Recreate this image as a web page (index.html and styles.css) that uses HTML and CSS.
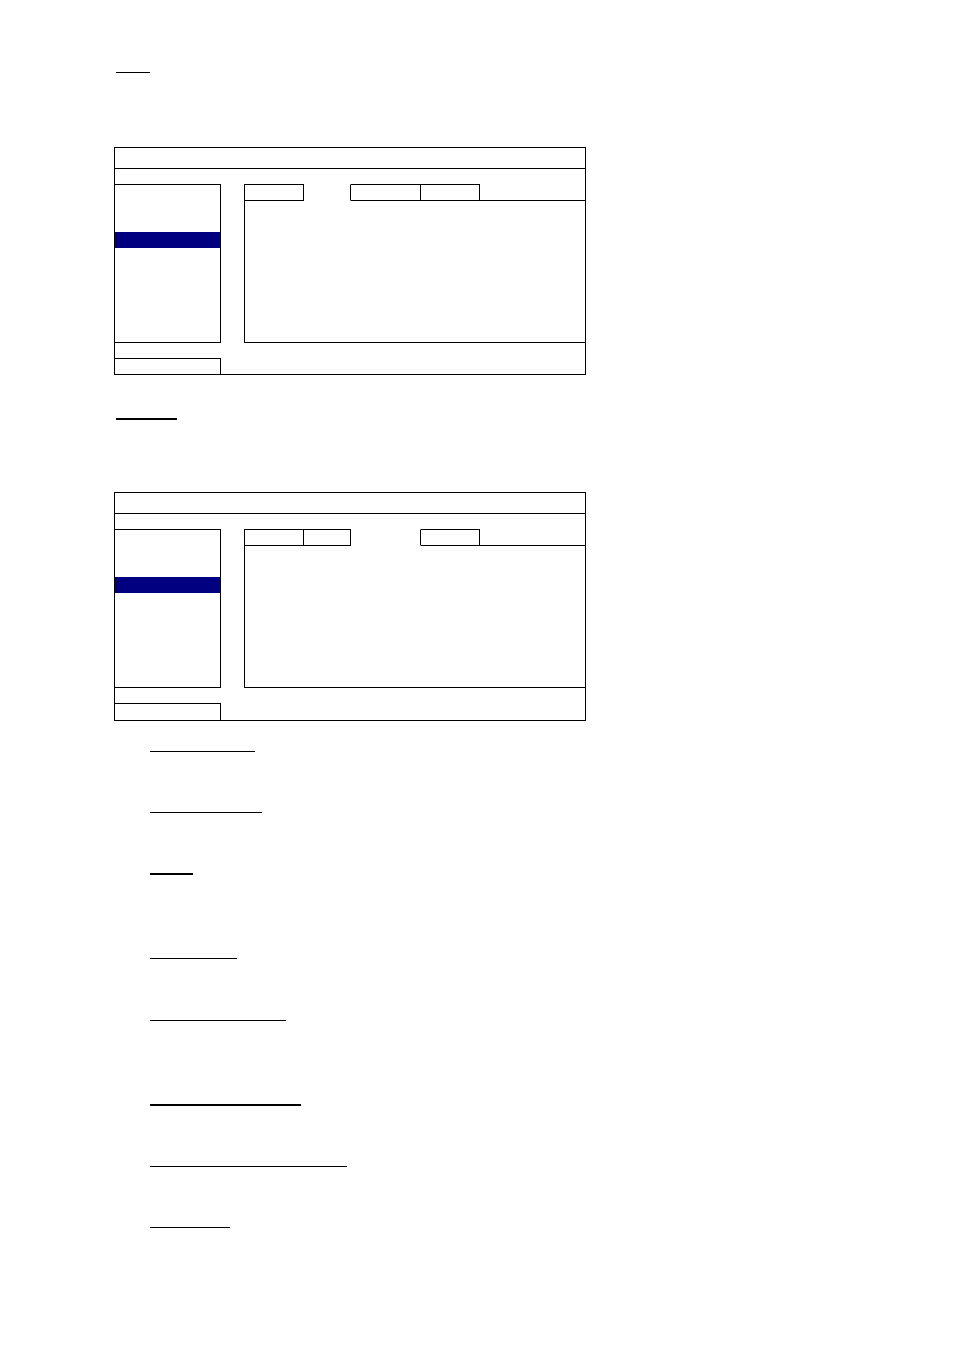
FILE: index.html
```html
<!DOCTYPE html>
<html lang="en">
<head>
<meta charset="utf-8">
<title>Menu screens</title>
<link rel="stylesheet" href="styles.css">
</head>
<body>
<main class="page">
  <div class="heading h-top"><span class="rule rule-a"></span></div>

  <section class="screen s1">
    <div class="titlebar"></div>
    <div class="spacer"></div>
    <div class="mainrow">
      <div class="menu"><div class="selected"></div></div>
      <div class="panel">
        <div class="tabs">
          <div class="tab t1"></div>
          <div class="tab t2 active"></div>
          <div class="tab t3"></div>
          <div class="tab t4"></div>
          <div class="tabfill"></div>
        </div>
        <div class="content"></div>
      </div>
    </div>
    <div class="footer"><div class="footbox"></div></div>
  </section>

  <div class="heading h-second"><span class="rule rule-b"></span></div>

  <section class="screen s2">
    <div class="titlebar"></div>
    <div class="spacer"></div>
    <div class="mainrow">
      <div class="menu"><div class="selected"></div></div>
      <div class="panel">
        <div class="tabs">
          <div class="tab t1"></div>
          <div class="tab t2"></div>
          <div class="tab t3 active"></div>
          <div class="tab t4"></div>
          <div class="tabfill"></div>
        </div>
        <div class="content"></div>
      </div>
    </div>
    <div class="footer"><div class="footbox"></div></div>
  </section>

  <ul class="items">
    <li class="item i1"><span class="rule thin w1"></span></li>
    <li class="item i2"><span class="rule thin w2"></span></li>
    <li class="item i3"><span class="rule thick w3"></span></li>
    <li class="item i4"><span class="rule thin w4"></span></li>
    <li class="item i5"><span class="rule thin w5"></span></li>
    <li class="item i6"><span class="rule thick w6"></span></li>
    <li class="item i7"><span class="rule thin w7"></span></li>
    <li class="item i8"><span class="rule thin w8"></span></li>
  </ul>
</main>
</body>
</html>
```

FILE: styles.css
```css
* { box-sizing: border-box; }

html, body {
  margin: 0;
  padding: 0;
  background: #ffffff;
  font-family: "Liberation Sans", Arial, sans-serif;
}

.page {
  display: flex;
  flex-direction: column;
  align-items: flex-start;
  padding-top: 72px;
  width: 954px;
  min-height: 1350px;
}

.rule {
  display: block;
  background: #000;
}

.heading { margin-left: 116px; }
.rule-a { width: 34px; height: 1px; }
.h-second { margin-top: 43px; }
.rule-b { width: 61px; height: 2px; }

/* screen mockups */
.screen {
  margin-left: 114px;
  width: 472px;
  height: 228px;
  border: 1px solid #000;
  display: flex;
  flex-direction: column;
}
.s1 { margin-top: 74px; }
.s2 { margin-top: 72px; height: 229px; }

.titlebar {
  height: 21px;
  border-bottom: 1px solid #000;
}
.spacer { height: 15px; }

.mainrow {
  display: flex;
  height: 159px;
}
.menu {
  width: 106px;
  border-top: 1px solid #000;
  border-right: 1px solid #000;
  border-bottom: 1px solid #000;
}
.selected {
  margin-top: 47px;
  height: 16px;
  background: #000080;
}

.panel {
  margin-left: 23px;
  flex: 1;
  border-left: 1px solid #000;
  border-bottom: 1px solid #000;
  display: flex;
  flex-direction: column;
}
.tabs {
  display: flex;
  height: 17px;
}
.tab {
  height: 17px;
  border-top: 1px solid #000;
  border-bottom: 1px solid #000;
  border-right: 1px solid #000;
}
.tab.active {
  border-top-color: transparent;
  border-bottom-color: transparent;
}
.t1 { width: 59px; }
.t2 { width: 47px; }
.t3 { width: 70px; }
.t4 { width: 59px; }
.tabfill {
  flex: 1;
  height: 17px;
  border-bottom: 1px solid #000;
}
.content { flex: 1; }

.footer {
  flex: 1;
  padding-top: 15px;
  display: flex;
  flex-direction: column;
}
.footbox {
  width: 106px;
  flex: 1;
  border-top: 1px solid #000;
  border-right: 1px solid #000;
}

/* underlined sub-headings */
.items {
  list-style: none;
  margin: 0;
  padding: 0 0 0 150px;
  display: flex;
  flex-direction: column;
}
.item { display: block; }
.thin { height: 1px; }
.thick { height: 2px; }

.i1 { margin-top: 30px; }
.i2 { margin-top: 60px; }
.i3 { margin-top: 60px; }
.i4 { margin-top: 83px; }
.i5 { margin-top: 61px; }
.i6 { margin-top: 83px; }
.i7 { margin-top: 60px; }
.i8 { margin-top: 60px; }

.w1 { width: 105px; }
.w2 { width: 112px; }
.w3 { width: 43px; }
.w4 { width: 87px; }
.w5 { width: 136px; }
.w6 { width: 151px; }
.w7 { width: 197px; }
.w8 { width: 80px; }
```
